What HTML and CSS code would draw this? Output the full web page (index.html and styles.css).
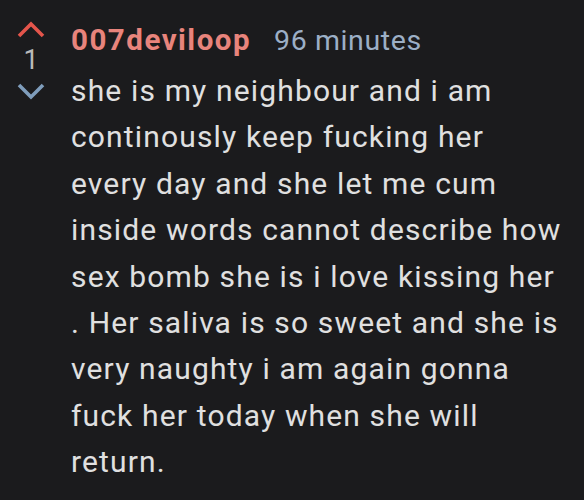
FILE: index.html
```html
<!DOCTYPE html>
<html lang="en">
<head>
    <meta charset="UTF-8">
    <meta name="viewport" content="width=device-width, initial-scale=1.0">
    <title>Comment</title>
    <link rel="stylesheet" href="styles.css">
</head>
<body>
    <div class="comment">
        <div class="votes">
            <svg class="arrow up" viewBox="0 0 30 18" width="30" height="18">
                <path d="M3 16 L15 4 L27 16" fill="none" stroke="currentColor" stroke-width="3.6"/>
            </svg>
            <span class="score">1</span>
            <svg class="arrow down" viewBox="0 0 30 18" width="30" height="18">
                <path d="M3 3 L15 15 L27 3" fill="none" stroke="currentColor" stroke-width="3.6"/>
            </svg>
        </div>
        <div class="content">
            <div class="meta">
                <span class="author">007deviloop</span>
                <span class="time">96 minutes</span>
            </div>
            <p class="body">she is my neighbour and i am continously keep fucking her every day and she let me cum inside words cannot describe how sex bomb she is i love kissing her . Her saliva is so sweet and she is very naughty i am again gonna fuck her today when she will return.</p>
        </div>
    </div>
</body>
</html>
```

FILE: styles.css
```css
body {
    margin: 0;
    background-color: #1b1b1d;
    font-family: Roboto, "Noto Sans", sans-serif;
    color: #e0e0e0;
}
.comment {
    display: flex;
    padding: 20px 0 0 16px;
}
.votes {
    width: 30px;
    display: flex;
    flex-direction: column;
    align-items: center;
}
.arrow.up {
    color: #e4554b;
}
.arrow.down {
    color: #7f9dbb;
    margin-top: 6px;
}
.score {
    margin-top: 6px;
    font-size: 27px;
    line-height: 32px;
    color: #bababa;
}
.content {
    margin-left: 25px;
    width: 496px;
}
.meta {
    display: flex;
    align-items: baseline;
    gap: 23px;
    line-height: 40px;
}
.author {
    font-size: 29.5px;
    font-weight: bold;
    letter-spacing: 1.5px;
    color: #e8847c;
}
.time {
    font-size: 28.5px;
    letter-spacing: 0.6px;
    color: #9cafc6;
}
.body {
    margin: 7px 0 0;
    font-size: 30px;
    letter-spacing: 1.15px;
    line-height: 46.4px;
}
```
